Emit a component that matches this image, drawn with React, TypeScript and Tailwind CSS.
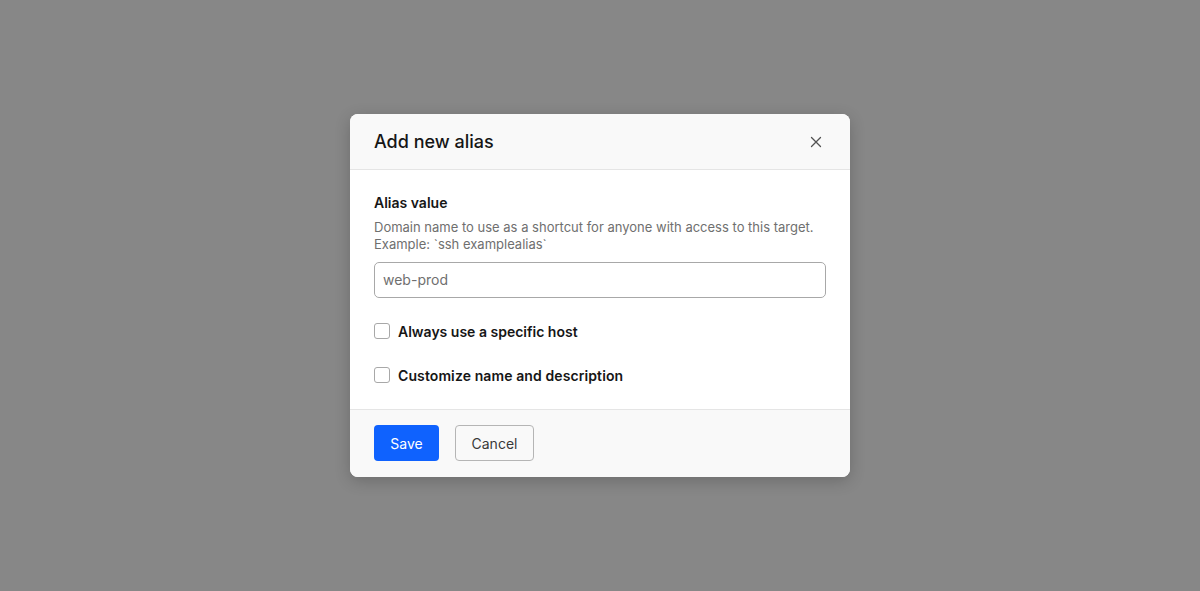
import React, { useState } from "react";

export default function App() {
  const [alias, setAlias] = useState("");
  const [specificHost, setSpecificHost] = useState(false);
  const [customize, setCustomize] = useState(false);

  return (
    <div
      className="flex h-screen w-full items-center justify-center bg-[#878787]"
      style={{ fontFamily: "Inter, 'Noto Sans', sans-serif" }}
    >
      <div className="w-[500px] overflow-hidden rounded-lg bg-white shadow-[0_4px_16px_rgba(0,0,0,0.2)]">
        <div className="flex h-[56px] items-center justify-between border-b border-[#e5e5e5] bg-[#f9f9f9] pl-6 pr-6">
          <h2 className="text-[18px] font-medium text-[#161616]">Add new alias</h2>
          <button className="flex h-5 w-5 items-center justify-center text-[#525252]">
            <svg width="12" height="12" viewBox="0 0 12 12" fill="none" stroke="currentColor" strokeWidth="1.3" strokeLinecap="round">
              <path d="M1.5 1.5l9 9M10.5 1.5l-9 9" />
            </svg>
          </button>
        </div>

        <div className="px-6 pt-[23px] pb-[24px]">
          <label htmlFor="alias" className="block text-[14px] leading-5 font-semibold text-[#161616]">
            Alias value
          </label>
          <p className="mt-[6px] text-[13px] leading-[17px] text-[#6f6f6f]">
            Domain name to use as a shortcut for anyone with access to this target.
            <br />
            Example: `ssh examplealias`
          </p>
          <input
            id="alias"
            type="text"
            value={alias}
            onChange={(e) => setAlias(e.target.value)}
            placeholder="web-prod"
            className="mt-[9px] block h-9 w-full rounded-[5px] border border-[#a8a8a8] bg-white px-2 pb-[2px] text-[14px] text-[#161616] placeholder-[#6f6f6f] focus:outline-none"
          />

          <label className="mt-[23px] flex h-5 items-center gap-2">
            <input
              type="checkbox"
              checked={specificHost}
              onChange={(e) => setSpecificHost(e.target.checked)}
              className="h-4 w-4 appearance-none rounded-[3px] border border-[#a8a8a8] bg-white"
            />
            <span className="text-[14px] font-semibold text-[#161616]">Always use a specific host</span>
          </label>

          <label className="mt-6 flex h-5 items-center gap-2">
            <input
              type="checkbox"
              checked={customize}
              onChange={(e) => setCustomize(e.target.checked)}
              className="h-4 w-4 appearance-none rounded-[3px] border border-[#a8a8a8] bg-white"
            />
            <span className="text-[14px] font-semibold tracking-[0.1px] text-[#161616]">Customize name and description</span>
          </label>
        </div>

        <div className="flex items-center gap-4 border-t border-[#e5e5e5] bg-[#f9f9f9] px-6 pt-[15px] pb-[16px]">
          <button className="h-9 w-[65px] rounded-[4px] bg-[#0f62fe] text-[14px] text-white">Save</button>
          <button className="h-9 w-[79px] rounded-[4px] border border-[#b5b5b5] bg-[#f9f9f9] text-[14px] text-[#393939]">
            Cancel
          </button>
        </div>
      </div>
    </div>
  );
}
